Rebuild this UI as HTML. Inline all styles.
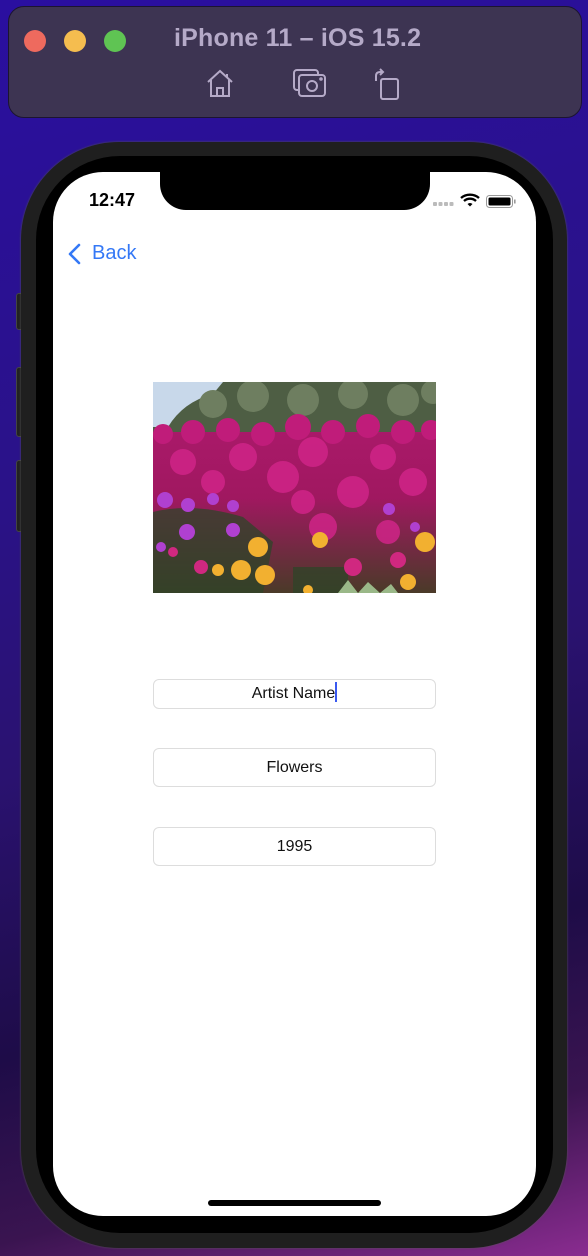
<!DOCTYPE html>
<html><head><meta charset="utf-8"><style>
*{margin:0;padding:0;box-sizing:border-box}
html,body{width:588px;height:1256px;overflow:hidden}
body{background:linear-gradient(165deg,#2a0fa0 0%,#2a1288 35%,#2a1270 55%,#1e0c48 75%,#3a1450 88%,#8a2c90 100%);font-family:"Liberation Sans",sans-serif;position:relative}
.bar{position:absolute;left:8px;top:6px;width:574px;height:112px;background:#3d3452;border-radius:16px;border:1px solid #1c1530}
.dot{position:absolute;top:23px;width:22px;height:22px;border-radius:50%}
.title{position:absolute;left:165px;top:17px;font-size:25px;font-weight:bold;color:#b5aac8;letter-spacing:0.2px}
.phone{position:absolute;left:21px;top:142px;width:546px;height:1106px;border-radius:98px;background:#1f1f1f;box-shadow:0 0 2px #555}
.inner{position:absolute;left:15px;top:14px;right:14px;bottom:15px;border-radius:84px;background:#000}
.screen{position:absolute;left:53px;top:172px;width:483px;height:1044px;border-radius:50px;background:#fff;overflow:hidden}
.notch{position:absolute;left:107px;top:-2px;width:270px;height:40px;background:#000;border-radius:0 0 26px 26px}
.btn{position:absolute;left:16px;width:6px;background:#222;border-radius:3px 0 0 3px;border:1px solid #444}
.field{position:absolute;left:100px;width:283px;border:1px solid #ddd;border-radius:6px;text-align:center;font-size:16px;color:#111}
</style></head><body>
<div class="bar">
<div class="dot" style="left:15px;background:#ee6a5e"></div>
<div class="dot" style="left:55px;background:#f5bd4f"></div>
<div class="dot" style="left:95px;background:#5fc453"></div>
<div class="title">iPhone 11 – iOS 15.2</div>
<svg style="position:absolute;left:195px;top:60px" width="32" height="34" viewBox="0 0 32 34" fill="none" stroke="#b5aac8" stroke-width="2"><path d="M4 15 L16 4 L28 15 M7 13 V29 H25 V13 M13 29 V21 H19 V29" /><path d="M23 7 V11"/></svg>
<svg style="position:absolute;left:283px;top:61px" width="36" height="32" viewBox="0 0 36 32" fill="none" stroke="#b5aac8" stroke-width="2"><rect x="2" y="2" width="24" height="20" rx="3"/><rect x="7" y="7" width="26" height="21" rx="3" fill="#3d3452"/><circle cx="20" cy="18" r="5"/><circle cx="29" cy="11" r="0.8"/></svg>
<svg style="position:absolute;left:362px;top:60px" width="32" height="34" viewBox="0 0 32 34" fill="none" stroke="#b5aac8" stroke-width="2"><rect x="10" y="12" width="17" height="20" rx="2"/><path d="M5 14 V9 Q5 5 9 5 H12 M9 2 L12 5 L9 8"/></svg>
</div>
<div class="btn" style="top:293px;height:37px"></div>
<div class="btn" style="top:367px;height:70px"></div>
<div class="btn" style="top:460px;height:72px"></div>
<div class="phone"><div class="inner"></div></div>
<div class="screen">
<div class="notch"></div>
<div style="position:absolute;left:36px;top:18px;font-size:18px;font-weight:bold;color:#000">12:47</div>
<svg style="position:absolute;left:380px;top:20px" width="90" height="16" viewBox="0 0 90 16">
<g fill="#bbb"><rect x="0" y="10" width="4" height="4" rx="1"/><rect x="5.5" y="10" width="4" height="4" rx="1"/><rect x="11" y="10" width="4" height="4" rx="1"/><rect x="16.5" y="10" width="4" height="4" rx="1"/></g>
<path d="M28 6 A14 14 0 0 1 46 6" stroke="#000" stroke-width="2.4" fill="none"/><path d="M31 9 A9 9 0 0 1 43 9" stroke="#000" stroke-width="2.4" fill="none"/><path d="M34.5 12 L37 14.5 L39.5 12 A4 4 0 0 0 34.5 12Z" fill="#000"/>
<rect x="53.5" y="3.5" width="26" height="12" rx="3" fill="none" stroke="#999"/><rect x="55.5" y="5.5" width="22" height="8" rx="1.5" fill="#000"/><rect x="81" y="7.5" width="1.6" height="4" fill="#999"/>
</svg>
<svg style="position:absolute;left:14px;top:70px" width="16" height="24" viewBox="0 0 16 24"><path d="M12 3 L3 12 L12 21" stroke="#3478f6" stroke-width="2.6" fill="none" stroke-linecap="round" stroke-linejoin="round"/></svg>
<div style="position:absolute;left:39px;top:70px;font-size:20px;color:#3478f6">Back</div>
<svg style="position:absolute;left:100px;top:210px" width="283" height="211" viewBox="0 0 283 211">
<defs><linearGradient id="g" x1="0" y1="0" x2="0" y2="1"><stop offset="0" stop-color="#b01a70"/><stop offset="0.55" stop-color="#a01860"/><stop offset="1" stop-color="#4a3a28"/></linearGradient></defs>
<rect width="283" height="211" fill="url(#g)"/>
<rect width="283" height="50" fill="#4e5e44"/>
<path d="M0 0 H70 L60 12 Q30 20 15 45 L0 45Z" fill="#c8d8ea"/>
<g fill="#6e7e60"><circle cx="60" cy="22" r="14"/><circle cx="100" cy="14" r="16"/><circle cx="150" cy="18" r="16"/><circle cx="200" cy="12" r="15"/><circle cx="250" cy="18" r="16"/><circle cx="280" cy="10" r="12"/></g>
<g fill="#c01c7a"><circle cx="10" cy="52" r="10"/><circle cx="40" cy="50" r="12"/><circle cx="75" cy="48" r="12"/><circle cx="110" cy="52" r="12"/><circle cx="145" cy="45" r="13"/><circle cx="180" cy="50" r="12"/><circle cx="215" cy="44" r="12"/><circle cx="250" cy="50" r="12"/><circle cx="278" cy="48" r="10"/></g>
<g fill="#d02488" opacity="0.85"><circle cx="30" cy="80" r="13"/><circle cx="90" cy="75" r="14"/><circle cx="160" cy="70" r="15"/><circle cx="230" cy="75" r="13"/><circle cx="60" cy="100" r="12"/><circle cx="130" cy="95" r="16"/><circle cx="200" cy="110" r="16"/><circle cx="260" cy="100" r="14"/><circle cx="170" cy="145" r="14"/><circle cx="235" cy="150" r="12"/><circle cx="150" cy="120" r="12"/></g>
<g fill="#2e4428" opacity="0.75"><path d="M0 130 Q40 120 90 135 L120 160 L110 211 H0Z"/><rect x="140" y="185" width="55" height="26"/></g>
<g fill="#b040d0"><circle cx="12" cy="118" r="8"/><circle cx="35" cy="123" r="7"/><circle cx="60" cy="117" r="6"/><circle cx="80" cy="124" r="6"/><circle cx="34" cy="150" r="8"/><circle cx="80" cy="148" r="7"/><circle cx="236" cy="127" r="6"/><circle cx="262" cy="145" r="5"/><circle cx="8" cy="165" r="5"/></g>
<g fill="#f2b030"><circle cx="105" cy="165" r="10"/><circle cx="88" cy="188" r="10"/><circle cx="112" cy="193" r="10"/><circle cx="65" cy="188" r="6"/><circle cx="167" cy="158" r="8"/><circle cx="272" cy="160" r="10"/><circle cx="255" cy="200" r="8"/><circle cx="155" cy="208" r="5"/></g>
<g fill="#d02880"><circle cx="48" cy="185" r="7"/><circle cx="245" cy="178" r="8"/><circle cx="200" cy="185" r="9"/><circle cx="20" cy="170" r="5"/></g>
<path d="M185 211 L195 198 L205 211 L215 200 L227 211 L238 202 L245 211Z" fill="#9ab888"/>
</svg>
<div class="field" style="top:507px;height:30px;line-height:28px">Artist Name<span style="display:inline-block;width:2px;height:20px;background:#3a5af0;vertical-align:middle;margin-top:-3px"></span></div>
<div class="field" style="top:576px;height:39px;line-height:37px">Flowers</div>
<div class="field" style="top:655px;height:39px;line-height:37px">1995</div>
<div style="position:absolute;left:155px;top:1028px;width:173px;height:6px;border-radius:3px;background:#000"></div>
</div>
</body></html>
